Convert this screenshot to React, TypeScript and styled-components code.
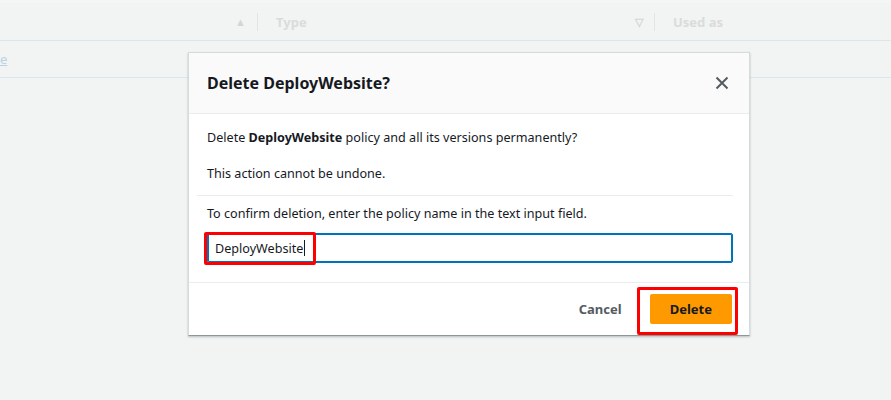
import React from "react";
import styled, { createGlobalStyle } from "styled-components";

const Global = createGlobalStyle`
  html, body { margin: 0; padding: 0; background: #f2f3f3; }
  body { font-family: "Noto Sans", "Open Sans", "Liberation Sans", sans-serif; }
  * { box-sizing: border-box; }
`;

const Page = styled.div`
  position: relative;
  width: 891px;
  height: 400px;
  background: #f2f3f3;
  overflow: hidden;
`;

const HeaderRow = styled.div`
  display: flex;
  align-items: center;
  height: 41px;
  border-top: 3px solid #f4f5f5;
  border-bottom: 1px solid #dbe6ee;
`;

const HeadCell = styled.div<{ $w: number }>`
  display: flex;
  align-items: center;
  width: ${(p) => p.$w}px;
  height: 100%;
  padding-left: 18px;
  font-size: 13px;
  font-weight: 700;
  color: #d9dcdc;
`;

const SortMark = styled.span`
  margin-left: auto;
  margin-right: 11px;
  font-size: 11px;
  color: #d4d6d6;
`;

const Sep = styled.span`
  width: 1px;
  height: 18px;
  background: #e2e4e4;
`;

const DataRow = styled.div`
  display: flex;
  align-items: center;
  height: 37px;
  border-bottom: 1px solid #dbe6ee;
`;

const FadedLink = styled.span`
  margin-left: 0;
  font-size: 13px;
  color: #b9d2e4;
  text-decoration: underline;
`;

const Overlay = styled.div`
  position: absolute;
  top: 52px;
  left: 188px;
`;

const Modal = styled.div`
  width: 562px;
  background: #ffffff;
  border: 1px solid #d5dbdb;
  border-bottom: 1px solid #8d9899;
  box-shadow: 0 1px 2px rgba(0, 28, 36, 0.25);
`;

const ModalHeader = styled.div`
  display: flex;
  align-items: center;
  justify-content: space-between;
  height: 61px;
  padding: 0 18px;
  background: #fafafa;
  border-bottom: 1px solid #eaeded;
`;

const Title = styled.h2`
  margin: 0;
  font-size: 16px;
  font-weight: 700;
  color: #16191f;
`;

const Close = styled.button`
  display: flex;
  border: 0;
  background: none;
  padding: 0;
  margin-right: 1px;
  color: #545b64;
  cursor: pointer;
`;

const Body = styled.div`
  padding: 14px 18px 19px;
  font-size: 12.6px;
  color: #16191f;
`;

const Para = styled.p`
  margin: 0 0 16px;
  line-height: 20px;
`;

const Divider = styled.hr`
  margin: -5px -2px 0 -10px;
  border: 0;
  border-top: 1px solid #eaeded;
`;

const Label = styled.p`
  margin: 8px 0 9px;
  line-height: 20px;
`;

const InputWrap = styled.div`
  position: relative;
`;

const Input = styled.div`
  display: flex;
  align-items: center;
  width: 526px;
  height: 30px;
  padding: 0 7px;
  border: 1px solid #0073bb;
  box-shadow: inset 0 0 0 1px #0073bb;
  border-radius: 2px;
  font-size: 12.6px;
  color: #16191f;
`;

const Caret = styled.span`
  display: inline-block;
  width: 1px;
  height: 16px;
  background: #16191f;
  margin-left: 1px;
`;

const Highlight = styled.div<{ $w: number; $h: number; $l: number; $t: number }>`
  position: absolute;
  left: ${(p) => p.$l}px;
  top: ${(p) => p.$t}px;
  width: ${(p) => p.$w}px;
  height: ${(p) => p.$h}px;
  border: 3px solid #ff0000;
  border-radius: 2px;
  pointer-events: none;
`;

const Footer = styled.div`
  display: flex;
  align-items: center;
  justify-content: flex-end;
  gap: 8px;
  height: 53px;
  padding: 0 17px 1px 18px;
  border-top: 1px solid #eaeded;
`;

const Btn = styled.button<{ $primary?: boolean }>`
  height: 30px;
  padding: 0 20px;
  border: 0;
  border-radius: 2px;
  font-family: inherit;
  font-size: 13px;
  font-weight: 700;
  background: ${(p) => (p.$primary ? "#ff9900" : "transparent")};
  color: ${(p) => (p.$primary ? "#16191f" : "#545b64")};
  cursor: pointer;
`;

const ButtonBox = styled.div`
  position: relative;
  display: flex;
`;

export default function App() {
  return (
    <Page>
      <Global />
      <HeaderRow>
        <HeadCell $w={257}>
          <SortMark>▲</SortMark>
        </HeadCell>
        <Sep />
        <HeadCell $w={396}>
          Type
          <SortMark>▽</SortMark>
        </HeadCell>
        <Sep />
        <HeadCell $w={200}>Used as</HeadCell>
      </HeaderRow>
      <DataRow>
        <FadedLink>e</FadedLink>
      </DataRow>
      <Overlay>
        <Modal>
          <ModalHeader>
            <Title>Delete DeployWebsite?</Title>
            <Close aria-label="Close">
              <svg width="16" height="16" viewBox="0 0 16 16" fill="none">
                <path d="M2.5 2.5l11 11M13.5 2.5l-11 11" stroke="currentColor" strokeWidth="2" />
              </svg>
            </Close>
          </ModalHeader>
          <Body>
            <Para>
              Delete <b>DeployWebsite</b> policy and all its versions permanently?
            </Para>
            <Para>This action cannot be undone.</Para>
            <Divider />
            <Label>To confirm deletion, enter the policy name in the text input field.</Label>
            <InputWrap>
              <Input>
                DeployWebsite
                <Caret />
              </Input>
              <Highlight $l={-3} $t={-1} $w={112} $h={33} />
            </InputWrap>
          </Body>
          <Footer>
            <Btn>Cancel</Btn>
            <ButtonBox>
              <Btn $primary>Delete</Btn>
              <Highlight $l={-13} $t={-7} $w={101} $h={48} />
            </ButtonBox>
          </Footer>
        </Modal>
      </Overlay>
    </Page>
  );
}
